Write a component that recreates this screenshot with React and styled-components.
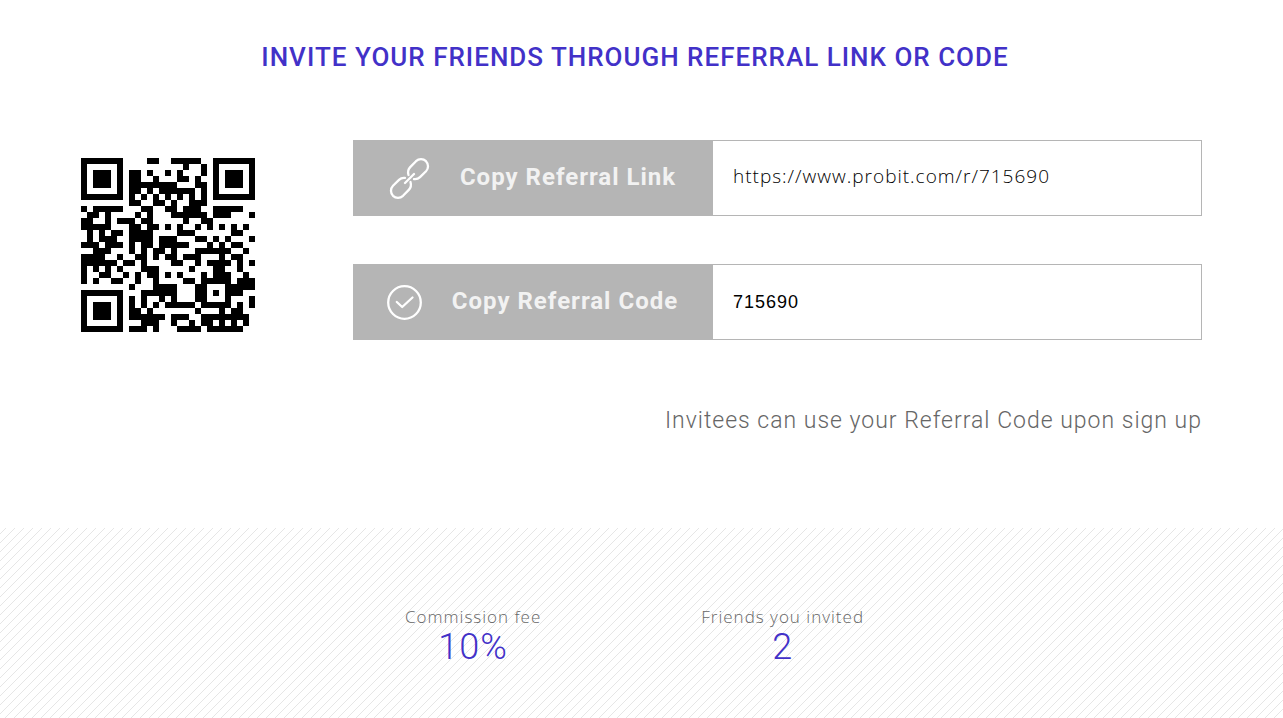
import React from "react";
import styled, { createGlobalStyle, css } from "styled-components";

const GlobalStyle = createGlobalStyle`
  * { box-sizing: border-box; }
  html, body, #root { height: 100%; }
  body {
    margin: 0;
    background: #fff;
    color: #666;
    font-family: Roboto, "Liberation Sans", sans-serif;
    letter-spacing: 1px;
  }
`;

/* ---- QR encoder: byte mode, version 3, level M, mask 2 ---- */

const SIZE = 29;
const DATA_WORDS = 44;
const EC_WORDS = 26;
const FORMAT_BITS = "101111001111100";

const multiply = (a, b) => {
  let product = 0;
  for (let i = 7; i >= 0; i--) {
    product = (product << 1) ^ ((product >>> 7) * 0x11d);
    if ((b >>> i) & 1) product ^= a;
  }
  return product;
};

function errorWords(data) {
  const generator = new Array(EC_WORDS).fill(0);
  generator[EC_WORDS - 1] = 1;
  let root = 1;
  for (let i = 0; i < EC_WORDS; i++) {
    for (let j = 0; j < EC_WORDS; j++) {
      generator[j] = multiply(generator[j], root);
      if (j + 1 < EC_WORDS) generator[j] ^= generator[j + 1];
    }
    root = multiply(root, 2);
  }
  const rest = new Array(EC_WORDS).fill(0);
  data.forEach((word) => {
    const factor = word ^ rest.shift();
    rest.push(0);
    generator.forEach((g, i) => {
      rest[i] ^= multiply(g, factor);
    });
  });
  return rest;
}

function encode(text) {
  const toBits = (n, width) => n.toString(2).padStart(width, "0");
  const bytes = [...new TextEncoder().encode(text)];
  let bits = "0100" + toBits(bytes.length, 8) + bytes.map((b) => toBits(b, 8)).join("") + "0000";
  while (bits.length % 8) bits += "0";
  const words = bits.match(/.{8}/g).map((w) => parseInt(w, 2));
  for (let pad = 0xec; words.length < DATA_WORDS; pad ^= 0xec ^ 0x11) words.push(pad);
  const stream = [...words, ...errorWords(words)].map((w) => toBits(w, 8)).join("");

  const grid = Array.from({ length: SIZE }, () => new Array(SIZE).fill(null));
  const finder = (row, col) => {
    for (let dr = -4; dr <= 4; dr++) {
      for (let dc = -4; dc <= 4; dc++) {
        const r = row + dr;
        const c = col + dc;
        const ring = Math.max(Math.abs(dr), Math.abs(dc));
        if (r >= 0 && c >= 0 && r < SIZE && c < SIZE) grid[r][c] = ring !== 2 && ring !== 4;
      }
    }
  };
  for (let i = 0; i < SIZE; i++) {
    grid[6][i] = i % 2 === 0;
    grid[i][6] = i % 2 === 0;
  }
  finder(3, 3);
  finder(3, SIZE - 4);
  finder(SIZE - 4, 3);
  for (let dr = -2; dr <= 2; dr++) {
    for (let dc = -2; dc <= 2; dc++) {
      grid[22 + dr][22 + dc] = Math.max(Math.abs(dr), Math.abs(dc)) !== 1;
    }
  }
  const format = [...FORMAT_BITS].map((b) => b === "1");
  const cols = [0, 1, 2, 3, 4, 5, 7, 8];
  format.forEach((bit, i) => {
    if (i < 8) grid[8][cols[i]] = bit;
    else grid[cols[14 - i]][8] = bit;
    if (i < 7) grid[SIZE - 1 - i][8] = bit;
    else grid[8][SIZE - 15 + i] = bit;
  });
  grid[SIZE - 8][8] = true;

  let index = 0;
  let upward = true;
  for (let right = SIZE - 1; right >= 1; right -= 2) {
    if (right === 6) right = 5;
    for (let step = 0; step < SIZE; step++) {
      const r = upward ? SIZE - 1 - step : step;
      for (const c of [right, right - 1]) {
        if (grid[r][c] === null) {
          const bit = stream[index++] === "1";
          grid[r][c] = c % 3 === 0 ? !bit : bit;
        }
      }
    }
    upward = !upward;
  }
  return grid;
}

function QrCode({ value }) {
  const path = encode(value)
    .flatMap((row, y) => row.map((on, x) => (on ? `M${x} ${y}h1v1h-1z` : "")))
    .join("");
  return (
    <QrImage viewBox={`0 0 ${SIZE} ${SIZE}`} shapeRendering="crispEdges" role="img" aria-label="Referral QR code">
      <path d={path} fill="#000" />
    </QrImage>
  );
}

/* ---- Layout ---- */

const Page = styled.main`
  display: flex;
  flex-direction: column;
  min-height: 100%;
`;

const Invite = styled.section`
  padding: 40px 81px 90px;
`;

const Title = styled.h1`
  margin: 0 13px 0 0;
  color: #4231c8;
  font-size: 26px;
  font-weight: 500;
  line-height: 34px;
  text-align: center;
  text-transform: uppercase;
`;

const Columns = styled.div`
  display: flex;
  align-items: flex-start;
  gap: 98px;
  margin-top: 66px;
`;

const QrImage = styled.svg`
  flex: none;
  width: 174px;
  height: 174px;
  margin-top: 18px;
`;

const Form = styled.div`
  flex: 1;
  min-width: 0;
  display: flex;
  flex-direction: column;
  gap: 48px;
`;

const CopyRow = styled.div`
  display: flex;
  height: 76px;
  border: 1px solid #b5b5b5;
`;

const CopyButton = styled.button`
  flex: none;
  display: flex;
  align-items: center;
  justify-content: center;
  gap: 30px;
  width: 359px;
  padding: 0 2px 0 0;
  border: 0;
  background: #b5b5b5;
  color: #f2f2f2;
  font: 700 24px/32px Roboto, "Liberation Sans", sans-serif;
  letter-spacing: 1px;
  cursor: pointer;
`;

const ButtonText = styled.span`
  padding-bottom: 2px;
`;

const Icon = styled.svg`
  flex: none;
  fill: none;
  stroke: #fff;
  stroke-width: 2.3;
  stroke-linecap: round;
  stroke-linejoin: round;
`;

const CopyField = styled.input`
  flex: 1;
  min-width: 0;
  padding: 0 20px;
  border: 0;
  outline: 0;
  background: #fff;
  color: #000;
  font-family: "Liberation Sans", sans-serif;
  font-size: 18px;
  letter-spacing: 1px;
  ${(p) =>
    p.$light &&
    css`
      padding-bottom: 4px;
      font-family: "Open Sans", sans-serif;
      font-size: 19px;
      font-weight: 300;
    `}
`;

const Note = styled.p`
  margin: 16px 0 0;
  font-size: 23px;
  font-weight: 300;
  line-height: 34px;
  text-align: right;
`;

const stripes = encodeURIComponent(
  '<svg xmlns="http://www.w3.org/2000/svg" width="9" height="9"><path d="M-1 7L7 -1M5 10L10 5" stroke="#e6e6e6" fill="none"/></svg>'
);

const Stats = styled.dl`
  flex: 1;
  display: flex;
  justify-content: center;
  align-items: flex-start;
  gap: 160px;
  margin: 0;
  padding: 78px 14px 40px 0;
  background: #fff url("data:image/svg+xml,${stripes}");
  font-weight: 300;
`;

const Stat = styled.div`
  text-align: center;
`;

const StatLabel = styled.dt`
  font-family: "Open Sans", sans-serif;
  font-size: 17px;
  line-height: 22px;
`;

const StatValue = styled.dd`
  margin: 0;
  color: #4231c8;
  font-size: 36px;
  line-height: 38px;
`;

const LinkIcon = () => (
  <Icon width="41" height="41" viewBox="0 0 41 41" aria-hidden="true">
    <path d="M19.5 17C18.6 14 19.2 11.2 21.2 9.1L27 3.2C29.8 .5 34.2 .5 37 3.2C39.7 6 39.7 10.4 37 13.2L31 19.1C29.3 20.8 27.3 21.4 25 21.1" />
    <path d="M21.5 24C22.4 27 21.8 29.8 19.8 31.9L14 37.8C11.2 40.5 6.8 40.5 4 37.8C1.3 35 1.3 30.6 4 27.8L10 21.9C11.7 20.2 13.7 19.6 16 19.9" />
    <path d="M16 25L25 16" />
  </Icon>
);

const CheckIcon = () => (
  <Icon width="35" height="35" viewBox="0 0 35 35" aria-hidden="true">
    <circle cx="17.5" cy="17.5" r="16.3" />
    <path d="M9.8 17L15.2 22L25.5 12.5" />
  </Icon>
);

const REFERRAL_CODE = "715690";
const REFERRAL_LINK = `https://www.probit.com/r/${REFERRAL_CODE}`;

export default function App() {
  const copy = (text) => () => navigator.clipboard?.writeText(text);
  return (
    <Page>
      <GlobalStyle />
      <Invite>
        <Title>Invite your friends through referral link or code</Title>
        <Columns>
          <QrCode value={REFERRAL_LINK} />
          <Form>
            <CopyRow>
              <CopyButton type="button" onClick={copy(REFERRAL_LINK)}>
                <LinkIcon />
                <ButtonText>Copy Referral Link</ButtonText>
              </CopyButton>
              <CopyField $light readOnly aria-label="Referral link" value={REFERRAL_LINK} />
            </CopyRow>
            <CopyRow>
              <CopyButton type="button" onClick={copy(REFERRAL_CODE)}>
                <CheckIcon />
                <ButtonText>Copy Referral Code</ButtonText>
              </CopyButton>
              <CopyField readOnly aria-label="Referral code" value={REFERRAL_CODE} />
            </CopyRow>
            <Note>Invitees can use your Referral Code upon sign up</Note>
          </Form>
        </Columns>
      </Invite>
      <Stats>
        <Stat>
          <StatLabel>Commission fee</StatLabel>
          <StatValue>10%</StatValue>
        </Stat>
        <Stat>
          <StatLabel>Friends you invited</StatLabel>
          <StatValue>2</StatValue>
        </Stat>
      </Stats>
    </Page>
  );
}
